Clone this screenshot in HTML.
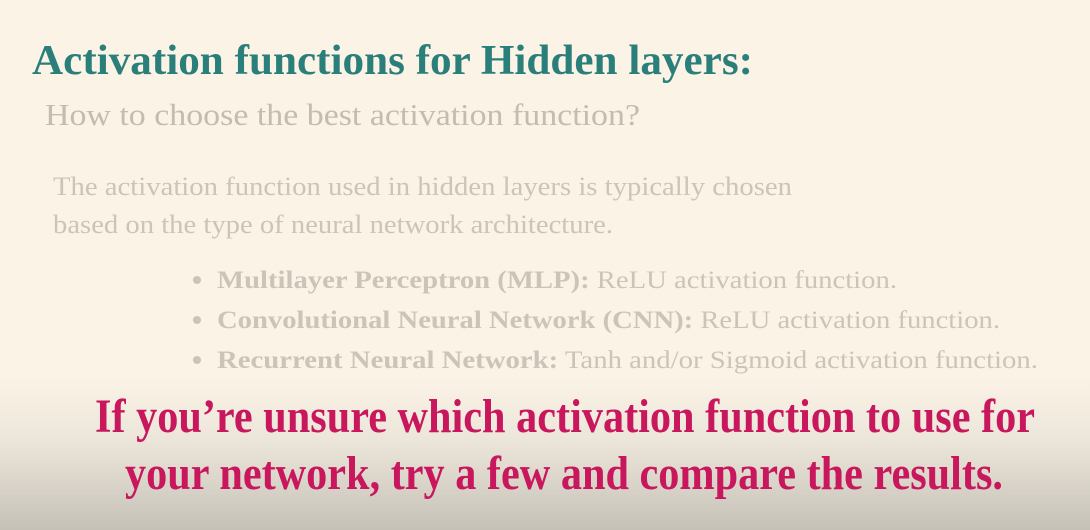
<!DOCTYPE html>
<html><head><meta charset="utf-8"><style>
html,body{margin:0;padding:0;width:1090px;height:530px;overflow:hidden}
body{background:linear-gradient(to bottom,#fbf3e6 0px,#fbf3e6 375px,#ece6da 440px,#c6c1b7 530px)}
svg{position:absolute;left:0;top:0}
text{font-family:"Liberation Serif",serif}
</style></head><body>
<svg width="1090" height="530" viewBox="0 0 1090 530">
<text x="32" y="74" font-size="42" font-weight="bold" fill="#2b7f7a" textLength="721" lengthAdjust="spacingAndGlyphs">Activation functions for Hidden layers:</text>
<text x="45" y="125" font-size="31" fill="#c4bbb1" textLength="595" lengthAdjust="spacingAndGlyphs">How to choose the best activation function?</text>
<text x="53" y="195" font-size="26" fill="#cdc4b9" textLength="739" lengthAdjust="spacingAndGlyphs">The activation function used in hidden layers is typically chosen</text>
<text x="53" y="233" font-size="26" fill="#cdc4b9" textLength="560" lengthAdjust="spacingAndGlyphs">based on the type of neural network architecture.</text>
<g fill="#cdc4b9" font-size="25.5">
<circle cx="197" cy="280" r="4"/>
<circle cx="197" cy="320" r="4"/>
<circle cx="197" cy="360" r="4"/>
<text x="217" y="288" textLength="680" lengthAdjust="spacingAndGlyphs"><tspan font-weight="bold">Multilayer Perceptron (MLP):</tspan> ReLU activation function.</text>
<text x="217" y="328" textLength="783" lengthAdjust="spacingAndGlyphs"><tspan font-weight="bold">Convolutional Neural Network (CNN):</tspan> ReLU activation function.</text>
<text x="217" y="368" textLength="821" lengthAdjust="spacingAndGlyphs"><tspan font-weight="bold">Recurrent Neural Network:</tspan> Tanh and/or Sigmoid activation function.</text>
</g>
<text x="95" y="432" font-size="48" font-weight="bold" fill="#c8175d" textLength="940" lengthAdjust="spacingAndGlyphs">If you’re unsure which activation function to use for</text>
<text x="125" y="489" font-size="48" font-weight="bold" fill="#c8175d" textLength="878" lengthAdjust="spacingAndGlyphs">your network, try a few and compare the results.</text>
</svg>
</body></html>
